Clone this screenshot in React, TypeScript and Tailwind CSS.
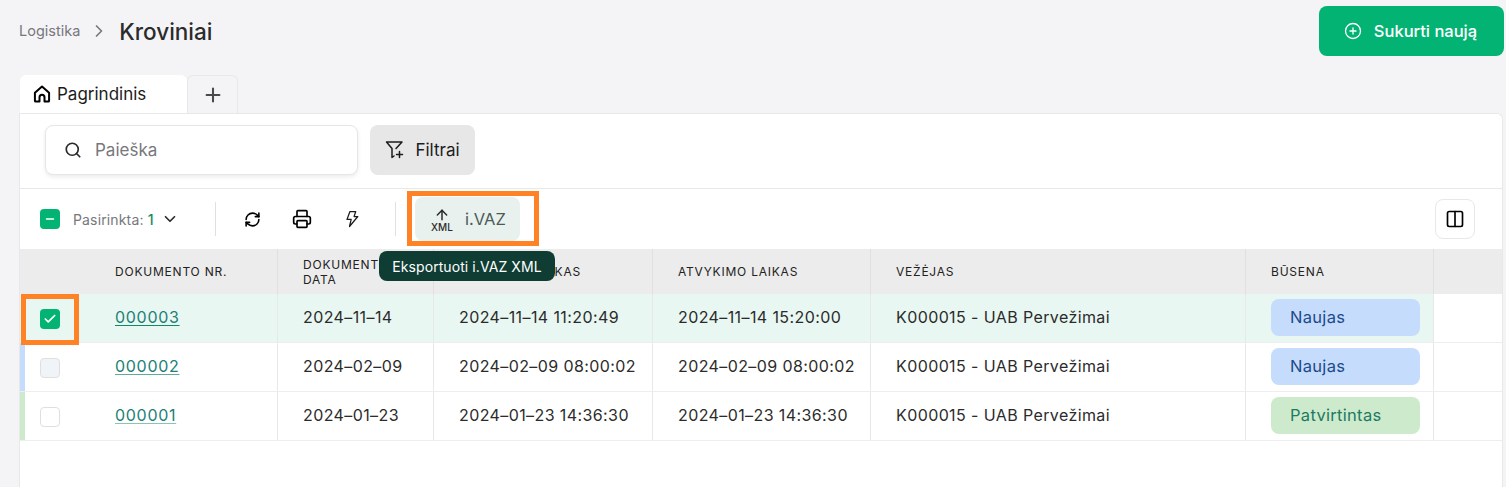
import { ArrowUp, Check, ChevronDown, ChevronRight, CirclePlus, Columns2, Minus, Plus, Printer, RefreshCw, Search } from 'lucide-react';

type Row = {
  nr: string;
  date: string;
  created: string;
  arrival: string;
  status: string;
  selected?: boolean;
  bar?: string;
  box?: string;
  line: string;
};

const rows: Row[] = [
  { nr: '000003', date: '2024–11–14', created: '2024–11–14 11:20:49', arrival: '2024–11–14 15:20:00', status: 'Naujas', selected: true, line: 'decoration-[#0f8a68]' },
  { nr: '000002', date: '2024–02–09', created: '2024–02–09 08:00:02', arrival: '2024–02–09 08:00:02', status: 'Naujas', bar: 'bg-[#c5dcfd]', box: 'bg-[#f0f4f8]', line: 'decoration-[#5fa99a]' },
  { nr: '000001', date: '2024–01–23', created: '2024–01–23 14:36:30', arrival: '2024–01–23 14:36:30', status: 'Patvirtintas', bar: 'bg-[#cdebcc]', box: 'bg-white', line: 'decoration-[#8fc2b6]' },
];

const grid = 'grid grid-cols-[75px_183px_156px_219px_218px_375px_188px_1fr]';

function Cell({ children, className = 'pl-[25px]' }: { children?: React.ReactNode; className?: string }) {
  return <div className={`flex items-center border-r border-[#e8e8e8] pb-[2px] ${className}`}>{children}</div>;
}

function Head({ children, className = 'pl-[25px]' }: { children?: React.ReactNode; className?: string }) {
  return <div className={`flex items-center border-r border-[#e0e0e0] text-[12px] leading-[15px] tracking-[0.78px] text-[#222] ${className}`}>{children}</div>;
}

export default function App() {
  const tint = (row: Row) => (row.selected ? 'bg-[#e9f7f2] pl-[25px]' : 'pl-[25px]');

  return (
    <div className="relative h-[487px] w-[1506px] overflow-hidden bg-[#f4f4f7] font-['Inter',sans-serif] text-[#2b2b2b]">
      {/* Header */}
      <div className="flex h-[75px] items-start justify-between pl-[19px] pr-[2px] pt-[6px]">
        <div className="flex h-[50px] items-center">
          <span className="text-[14.5px] text-[#77777c]">Logistika</span>
          <ChevronRight className="ml-[9px] mr-[10px] h-[20px] w-[20px] text-[#77777c]" strokeWidth={2} />
          <span className="mt-[2px] text-[22.5px] font-medium text-[#2b2b2b]">Kroviniai</span>
        </div>
        <button className="flex h-[50px] w-[185px] items-center justify-center gap-[12px] rounded-[8px] bg-[#03b374] pr-[2px] text-[16.5px] font-medium text-white">
          <CirclePlus className="h-[18px] w-[18px]" strokeWidth={1.75} />
          Sukurti naują
        </button>
      </div>

      {/* Tabs */}
      <div className="flex h-[38px] pl-[20px]">
        <div className="flex w-[167px] items-center gap-[5px] rounded-t-[6px] bg-white pl-[12px] text-[17px] text-[#1c1c1c]">
          <svg viewBox="0 0 24 24" className="h-[20px] w-[20px] text-black" fill="none" stroke="currentColor" strokeWidth={2.4} strokeLinejoin="round">
            <path d="M3.5 10.5 12 3l8.5 7.5V20a1 1 0 0 1-1 1H15v-5a3 3 0 0 0-6 0v5H4.500a1 1 0 0 1-1-1z" />
          </svg>
          <span className="mt-[2px]">Pagrindinis</span>
        </div>
        <div className="flex w-[51px] items-center justify-center rounded-t-[6px] border border-b-0 border-[#e8e8e8] bg-[#f4f4f7]">
          <Plus className="h-[22px] w-[22px] text-[#4a4a4a]" strokeWidth={2.25} />
        </div>
      </div>

      {/* Card */}
      <div className="ml-[19px] mr-[3px] h-[374px] rounded-tr-[6px] border-l border-r border-t border-[#e8e8e8] bg-white">
        <div className="flex h-[75px] items-center gap-[12px] border-b border-[#e8e8e8] pb-[2px] pl-[25px]">
          <div className="flex h-[50px] w-[313px] items-center rounded-[8px] border border-[#e6e6e6] bg-white pl-[18px] shadow-[0_2px_4px_rgba(0,0,0,0.08)]">
            <Search className="h-[18px] w-[18px] text-[#2b2b2b]" strokeWidth={2.25} />
            <span className="ml-[13px] mt-[2px] text-[17px] text-[#77777c]">Paieška</span>
          </div>
          <button className="flex h-[50px] w-[105px] items-center justify-center gap-[10px] rounded-[8px] bg-[#e7e7e7] text-[17px] text-[#1c1c1c]">
            <svg viewBox="0 0 20 20" className="h-[20px] w-[20px]" fill="none" stroke="currentColor" strokeWidth={1.5} strokeLinecap="round" strokeLinejoin="round">
              <path d="M1.500 2h15.500l-6 6.500M1.500 2l5.500 6.500v9l2-1.500" />
              <path d="M14.500 11.500v6M11.500 14.500h6" />
            </svg>
            <span className="mt-[2px]">Filtrai</span>
          </button>
        </div>

        {/* Toolbar */}
        <div className="flex h-[60px] items-center justify-between pl-[20px] pr-[27px]">
          <div className="flex items-center">
            <span className="flex h-[20px] w-[20px] items-center justify-center rounded-[4px] bg-[#03b374]">
              <Minus className="h-[12px] w-[12px] text-white" strokeWidth={3} />
            </span>
            <span className="ml-[13px] w-[82px] text-[14px] tracking-[0.15px] text-[#77777c]">
              Pasirinkta: <span className="font-medium text-[#0f8a68]">1</span>
            </span>
            <ChevronDown className="ml-[6px] h-[18px] w-[18px] text-[#2b2b2b]" strokeWidth={2.25} />
            <span className="ml-[36px] h-[34px] w-px bg-[#e0e0e0]" />
            <RefreshCw className="ml-[28px] h-[17px] w-[17px] text-black" strokeWidth={2.25} />
            <Printer className="ml-[31px] h-[20px] w-[20px] text-black" strokeWidth={2} />
            <svg viewBox="0 0 24 24" className="ml-[30px] h-[20px] w-[20px] text-[#1c1c1c]" fill="none" stroke="currentColor" strokeWidth={1.5} strokeLinejoin="round">
              <path d="M9.500 3h7l-2 6h4.500L9 21l2-8.500H6z" />
            </svg>
            <span className="ml-[33px] h-[34px] w-px bg-[#e0e0e0]" />
            <button className="ml-[19px] flex h-[44px] w-[105px] items-center rounded-[8px] bg-[#e8f1ee] pl-[15px] text-[16.5px] text-[#4a5a55]">
              <span className="flex w-[24px] flex-col items-center text-[#2b2b2b]">
                <ArrowUp className="h-[16px] w-[16px]" strokeWidth={2.25} />
                <span className="-mt-[1px] text-[10px] leading-[10px] font-medium">XML</span>
              </span>
              <span className="ml-[11px]">i.VAZ</span>
            </button>
          </div>
          <button className="flex h-[40px] w-[40px] items-center justify-center rounded-[8px] border border-[#e8e8e8] bg-white">
            <Columns2 className="h-[20px] w-[20px] text-black" strokeWidth={2} />
          </button>
        </div>

        {/* Table */}
        <div className={`${grid} h-[45px] bg-[#ececec]`}>
          <div />
          <Head className="pl-[20px]">DOKUMENTO NR.</Head>
          <Head>DOKUMENTO<br />DATA</Head>
          <Head>SUKŪRIMO LAIKAS</Head>
          <Head>ATVYKIMO LAIKAS</Head>
          <Head>VEŽĖJAS</Head>
          <Head>BŪSENA</Head>
          <div />
        </div>
        {rows.map((row) => (
          <div key={row.nr} className={`${grid} h-[49px] border-b border-[#eeeeee] text-[16px] tracking-[0.4px]`}>
            <div className={`flex items-center ${row.selected ? 'bg-[#e9f7f2]' : ''}`}>
              <span className={`h-full w-[5px] ${row.bar ?? ''}`} />
              <span className={`ml-[15px] mt-[2px] flex h-[20px] w-[20px] items-center justify-center rounded-[4px] ${row.selected ? 'bg-[#03b374]' : `border border-[#dfdfdf] ${row.box}`}`}>
                {row.selected && <Check className="h-[14px] w-[14px] text-white" strokeWidth={3} />}
              </span>
            </div>
            <Cell className={row.selected ? 'bg-[#e9f7f2] pl-[20px]' : 'pl-[20px]'}>
              <a className={`tracking-[0.7px] text-[#1c8078] underline underline-offset-2 ${row.line}`}>{row.nr}</a>
            </Cell>
            <Cell className={tint(row)}>{row.date}</Cell>
            <Cell className={tint(row)}>{row.created}</Cell>
            <Cell className={tint(row)}>{row.arrival}</Cell>
            <Cell className={tint(row)}>K000015 - UAB Pervežimai</Cell>
            <Cell className={tint(row)}>
              <span className={`flex h-[37px] w-[149px] items-center rounded-[8px] pl-[19px] text-[16.5px] tracking-[0.3px] ${row.status === 'Naujas' ? 'bg-[#c5dcfd] text-[#1d4a8a]' : 'bg-[#cdebcc] text-[#1c7a62]'}`}>
                {row.status}
              </span>
            </Cell>
            <div />
          </div>
        ))}
      </div>

      {/* Overlays */}
      <div className="absolute left-[379px] top-[251px] flex h-[30px] w-[176px] items-center justify-center rounded-[8px] bg-[#0f3d33] text-[14px] tracking-[0.08px] text-white">
        Eksportuoti i.VAZ XML
      </div>
      <div className="absolute left-[407px] top-[191px] h-[55px] w-[132px] border-[5px] border-[#ff8227]" />
      <div className="absolute left-[21px] top-[294px] h-[51px] w-[58px] border-[5px] border-[#ff8227]" />
    </div>
  );
}
